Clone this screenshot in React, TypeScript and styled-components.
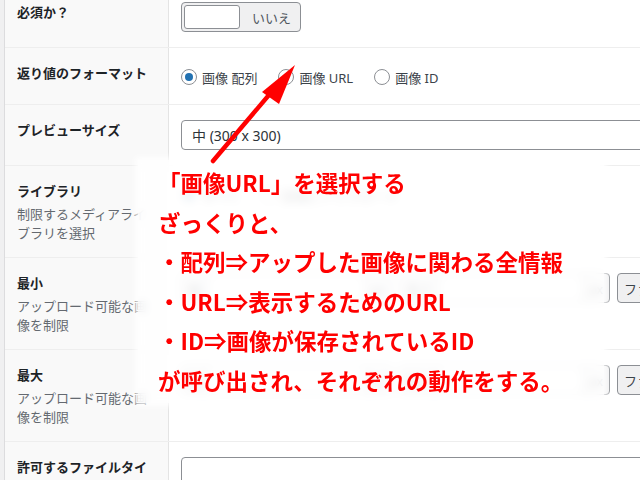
import styled, { createGlobalStyle } from "styled-components";

const GlobalStyle = createGlobalStyle`
  html, body {
    margin: 0;
    padding: 0;
    overflow: hidden;
  }
  body {
    font-family: "Noto Sans", "Noto Sans CJK JP", sans-serif;
    background: #f0f0f1;
  }
`;

const Page = styled.div`
  position: relative;
  width: 640px;
  height: 480px;
  overflow: hidden;
  background: #f0f0f1;
  padding-left: 4px;
  box-sizing: border-box;
`;

const Table = styled.div`
  margin-top: -13px;
  background: #fff;
  border-left: 1px solid #dcdcde;
`;

const Row = styled.div`
  display: grid;
  grid-template-columns: 164px 1fr;
  border-bottom: 1px solid #eeeeee;
`;

const LabelCell = styled.div`
  background: #f9f9f9;
  border-right: 1px solid #e4e4e4;
  padding: 15px 12px;
`;

const Title = styled.div`
  font-family: "Noto Sans CJK JP", sans-serif;
  font-size: 13px;
  font-weight: 700;
  line-height: 20px;
  color: #1d2327;
`;

const Desc = styled.div`
  font-family: "Noto Sans CJK JP", sans-serif;
  font-size: 13px;
  line-height: 19px;
  color: #646970;
  margin-top: 3px;
`;

const ContentCell = styled.div`
  padding: 15px 12px;
  min-width: 0;
  white-space: nowrap;
`;

const Toggle = styled.div`
  width: 120px;
  height: 30px;
  box-sizing: border-box;
  border: 1px solid #8c8f94;
  border-radius: 4px;
  background: #f0f0f1;
  display: flex;
  align-items: center;
  padding: 0 2px;
`;

const Knob = styled.div`
  width: 56px;
  height: 24px;
  box-sizing: border-box;
  background: #fff;
  border: 1px solid #8c8f94;
  border-radius: 3px;
`;

const ToggleText = styled.span`
  font-family: "Noto Sans CJK JP", sans-serif;
  font-size: 13px;
  color: #50575e;
  margin-left: 12px;
`;

const RadioList = styled.div`
  display: flex;
  align-items: center;
  height: 26px;
  box-sizing: border-box;
  padding-top: 2px;
`;

const RadioItem = styled.label`
  display: inline-flex;
  align-items: center;
  gap: 5px;
  margin-right: 21px;
  font-size: 13px;
  color: #3c434a;
  font-family: "Noto Sans", "Noto Sans CJK JP", sans-serif;
`;

const Radio = styled.span<{ $checked?: boolean }>`
  width: 16px;
  height: 16px;
  box-sizing: border-box;
  border-radius: 50%;
  border: 1px solid #8c8f94;
  background: #fff;
  display: inline-flex;
  align-items: center;
  justify-content: center;
  &::after {
    content: "";
    width: 8px;
    height: 8px;
    border-radius: 50%;
    background: ${(p) => (p.$checked ? "#2271b1" : "transparent")};
  }
`;

const Select = styled.div`
  height: 30px;
  width: 520px;
  box-sizing: border-box;
  border: 1px solid #8c8f94;
  border-radius: 4px;
  background: #fff;
  display: flex;
  align-items: center;
  padding-left: 10px;
  font-size: 14px;
  color: #2c3338;
  font-family: "Noto Sans", "Noto Sans CJK JP", sans-serif;
`;

const Groups = styled.div`
  display: flex;
  gap: 7px;
`;

const Group = styled.div`
  display: flex;
  height: 30px;
  width: 211px;
  flex: none;
`;

const Addon = styled.div<{ $side: "left" | "right" }>`
  box-sizing: border-box;
  height: 30px;
  padding: 0 6px;
  display: flex;
  align-items: center;
  background: #f0f0f1;
  border: 1px solid #8c8f94;
  border-radius: ${(p) => (p.$side === "left" ? "4px 0 0 4px" : "0 4px 4px 0")};
  font-family: "Noto Sans CJK JP", sans-serif;
  font-size: 13px;
  color: #3c434a;
`;

const GroupInput = styled.div`
  flex: 1;
  height: 30px;
  box-sizing: border-box;
  border-top: 1px solid #8c8f94;
  border-bottom: 1px solid #8c8f94;
  background: #fff;
`;

const TextInput = styled.div`
  height: 30px;
  width: 520px;
  box-sizing: border-box;
  border: 1px solid #8c8f94;
  border-radius: 4px;
  background: #fff;
`;

const Note = styled.div`
  position: absolute;
  left: 138px;
  top: 160px;
  width: 466px;
  height: 243px;
  box-sizing: border-box;
  padding: 3px 0 0 20px;
  background: rgba(255, 255, 255, 0.86);
  backdrop-filter: blur(5px);
  box-shadow: 0 0 6px 3px rgba(255, 255, 255, 0.85);
`;

const NoteLine = styled.div`
  font-family: "Noto Sans CJK JP", sans-serif;
  font-weight: 700;
  font-size: 22.5px;
  line-height: 39.5px;
  color: #ff0000;
  white-space: nowrap;
`;

const Arrow = styled.svg`
  position: absolute;
  left: 0;
  top: 0;
  pointer-events: none;
`;

const SizeGroups = () => (
  <Groups>
    <Group>
      <Addon $side="left">幅</Addon>
      <GroupInput />
      <Addon $side="right">px</Addon>
    </Group>
    <Group>
      <Addon $side="left">高さ</Addon>
      <GroupInput />
      <Addon $side="right">px</Addon>
    </Group>
    <Group>
      <Addon $side="left">ファイルサイズ</Addon>
      <GroupInput />
      <Addon $side="right">MB</Addon>
    </Group>
  </Groups>
);

export default function App() {
  return (
    <>
      <GlobalStyle />
      <Page>
        <Table>
          <Row>
            <LabelCell>
              <Title>必須か？</Title>
            </LabelCell>
            <ContentCell>
              <Toggle>
                <Knob />
                <ToggleText>いいえ</ToggleText>
              </Toggle>
            </ContentCell>
          </Row>
          <Row>
            <LabelCell>
              <Title>返り値のフォーマット</Title>
            </LabelCell>
            <ContentCell>
              <RadioList>
                <RadioItem>
                  <Radio $checked />
                  画像 配列
                </RadioItem>
                <RadioItem>
                  <Radio />
                  画像 URL
                </RadioItem>
                <RadioItem>
                  <Radio />
                  画像 ID
                </RadioItem>
              </RadioList>
            </ContentCell>
          </Row>
          <Row>
            <LabelCell>
              <Title>プレビューサイズ</Title>
            </LabelCell>
            <ContentCell>
              <Select>中 (300 x 300)</Select>
            </ContentCell>
          </Row>
          <Row>
            <LabelCell>
              <Title>ライブラリ</Title>
              <Desc>制限するメディアライブラリを選択</Desc>
            </LabelCell>
            <ContentCell>
              <RadioList>
                <RadioItem>
                  <Radio $checked />
                  すべて
                </RadioItem>
                <RadioItem>
                  <Radio />
                  投稿にアップロード
                </RadioItem>
              </RadioList>
            </ContentCell>
          </Row>
          <Row>
            <LabelCell>
              <Title>最小</Title>
              <Desc>アップロード可能な画像を制限</Desc>
            </LabelCell>
            <ContentCell>
              <SizeGroups />
            </ContentCell>
          </Row>
          <Row>
            <LabelCell>
              <Title>最大</Title>
              <Desc>アップロード可能な画像を制限</Desc>
            </LabelCell>
            <ContentCell>
              <SizeGroups />
            </ContentCell>
          </Row>
          <Row>
            <LabelCell>
              <Title>許可するファイルタイプ</Title>
              <Desc>カンマ区切りのリスト。空白の場合はすべてのタイプ</Desc>
            </LabelCell>
            <ContentCell>
              <TextInput />
            </ContentCell>
          </Row>
        </Table>

        <Note>
          <NoteLine>「画像URL」を選択する</NoteLine>
          <NoteLine>ざっくりと、</NoteLine>
          <NoteLine>・配列⇒アップした画像に関わる全情報</NoteLine>
          <NoteLine>・URL⇒表示するためのURL</NoteLine>
          <NoteLine>・ID⇒画像が保存されているID</NoteLine>
          <NoteLine>が呼び出され、それぞれの動作をする。</NoteLine>
        </Note>

        <Arrow width="640" height="480" viewBox="0 0 640 480">
          <line x1="213" y1="161" x2="274" y2="89" stroke="#ff0000" strokeWidth="4.5" strokeLinecap="round" />
          <polygon points="295,65 262,92 279,104" fill="#ff0000" />
        </Arrow>
      </Page>
    </>
  );
}
